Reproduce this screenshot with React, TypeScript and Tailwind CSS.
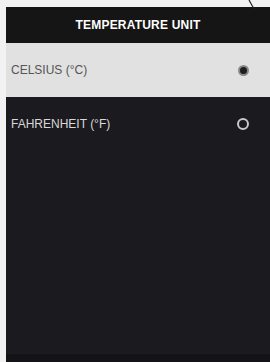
export default function App() {
  const font = { fontFamily: '"Liberation Sans", Arial, sans-serif' };
  return (
    <div className="relative w-[270px] h-[362px] bg-[#f2f2f2] pl-[6px] pt-[7px] overflow-hidden" style={font}>
      <svg className="absolute right-[14px] top-0" width="8" height="10" viewBox="0 0 8 10">
        <path d="M1 0 L6 9" stroke="#222" strokeWidth="1.2" />
      </svg>
      <div className="flex flex-col h-full bg-[#1b1a1e]">
        <div className="h-[36px] bg-[#151515] flex items-center justify-center">
          <span className="text-[12px] font-bold text-white tracking-[0.2px]">TEMPERATURE UNIT</span>
        </div>
        <div className="h-[54px] bg-[#e1e1e1] flex items-center justify-between pl-[5px] pr-[21px]">
          <span className="text-[12px] text-[#555]">CELSIUS (°C)</span>
          <span className="w-[11px] h-[11px] rounded-full bg-[#1e1e1e] border-[2px] border-[#888]" />
        </div>
        <div className="h-[54px] flex items-center justify-between pl-[5px] pr-[21px]">
          <span className="text-[12px] text-[#d8d8d8]">FAHRENHEIT (°F)</span>
          <span className="w-[12px] h-[12px] rounded-full border-[2px] border-[#c8c8c8]" />
        </div>
        <div className="flex-1" />
        <div className="h-[8px] bg-[#141416]" />
      </div>
    </div>
  );
}
